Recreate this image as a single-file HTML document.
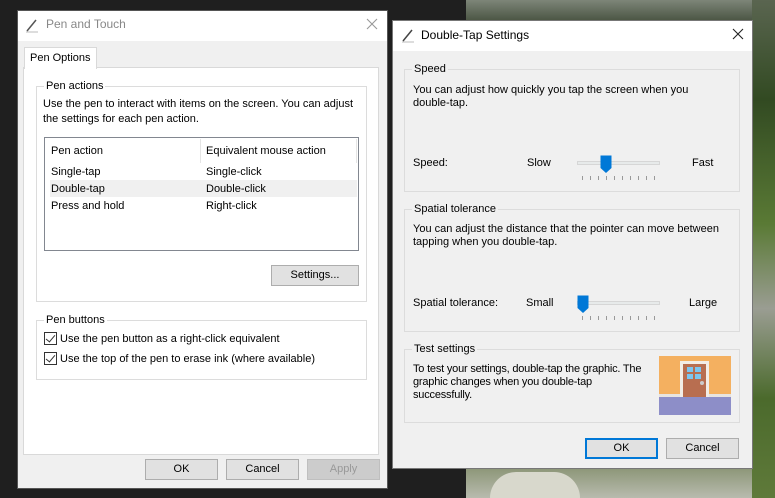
<!DOCTYPE html>
<html><head><meta charset="utf-8"><style>
*{margin:0;padding:0;box-sizing:border-box}
body{width:775px;height:498px;overflow:hidden;background:#1f1f1f;position:relative;font-family:"Liberation Sans",sans-serif;font-size:11px;color:#000;white-space:nowrap}
.a{position:absolute}
.photo{left:466px;top:0;width:309px;height:498px;background:linear-gradient(180deg,#7d8578 0%,#34402c 6%,#2f3b26 30%,#4a5e30 55%,#5c6d45 80%,#7e8a66 92%,#b8bbae 100%)}
.photo2{left:752px;top:0;width:23px;height:498px;background:linear-gradient(180deg,#5a6550,#324a22 20%,#5a7a35 45%,#9a9d92 62%,#4b6a2c 80%,#5f7a3a)}
.dlg{background:#f0f0f0;border:1px solid #888}
.title{background:#fff;height:30px}
.grp{border:1px solid #dcdcdc}
.lg{position:absolute;top:-8px;left:7px;background:#f0f0f0;padding:0 2px;line-height:14px}
.btn{position:absolute;height:21px;background:#e1e1e1;border:1px solid #adadad;text-align:center;line-height:19px}
.cb{position:absolute;width:13px;height:13px;border:1px solid #333;background:#fff}
.cb:after{content:"";position:absolute;left:3px;top:0px;width:4px;height:8px;border:solid #333;border-width:0 1.5px 1.5px 0;transform:rotate(40deg)}
.ticks span{position:absolute;top:0;width:1px;height:4px;background:#999}
</style></head><body>
<div class="a photo"></div>
<div class="a photo2"></div>
<div class="a" style="left:490px;top:472px;width:90px;height:26px;background:#d8d8cc;border-radius:40px 40px 0 0"></div>

<div class="a dlg" style="left:17px;top:10px;width:371px;height:479px;border-color:#555">
 <div class="title"></div>
</div>
<svg class="a" style="left:24px;top:17px" width="16" height="16"><path d="M3 14 L12 3" stroke="#555" stroke-width="1.5"/><path d="M2 15 L14 15" stroke="#bbb"/></svg>
<div class="a" style="left:46px;top:17px;font-size:12px;color:#888">Pen and Touch</div>
<svg class="a" style="left:366px;top:18px" width="12" height="12"><path d="M1 1L11 11M11 1L1 11" stroke="#999" stroke-width="1.1"/></svg>
<div class="a" style="left:23px;top:67px;width:356px;height:388px;background:#fff;border:1px solid #d9d9d9"></div>
<div class="a" style="left:24px;top:47px;width:73px;height:22px;background:#fff;border:1px solid #d9d9d9;border-bottom:none;padding:4px 5px">Pen Options</div>

<div class="a grp" style="left:36px;top:86px;width:331px;height:216px;background:#fff"><div class="lg" style="background:#fff">Pen actions</div></div>
<div class="a" style="left:43px;top:97px;line-height:15px">Use the pen to interact with items on the screen. You can adjust<br>the settings for each pen action.</div>
<div class="a" style="left:44px;top:137px;width:315px;height:114px;border:1px solid #828790;background:#fff"></div>
<div class="a" style="left:200px;top:139px;width:1px;height:24px;background:#e5e5e5"></div>
<div class="a" style="left:356px;top:139px;width:1px;height:24px;background:#e5e5e5"></div>
<div class="a" style="left:51px;top:145px">Pen action</div>
<div class="a" style="left:206px;top:145px">Equivalent mouse action</div>
<div class="a" style="left:50px;top:180px;width:307px;height:17px;background:#f0f0f0"></div>
<div class="a" style="left:51px;top:166px">Single-tap</div><div class="a" style="left:206px;top:166px">Single-click</div>
<div class="a" style="left:51px;top:183px">Double-tap</div><div class="a" style="left:206px;top:183px">Double-click</div>
<div class="a" style="left:51px;top:200px">Press and hold</div><div class="a" style="left:206px;top:200px">Right-click</div>
<div class="btn" style="left:271px;top:265px;width:88px">Settings...</div>

<div class="a grp" style="left:36px;top:320px;width:331px;height:60px;background:#fff"><div class="lg" style="background:#fff">Pen buttons</div></div>
<div class="cb" style="left:44px;top:332px"></div><div class="a" style="left:60px;top:333px">Use the pen button as a right-click equivalent</div>
<div class="cb" style="left:44px;top:352px"></div><div class="a" style="left:60px;top:353px">Use the top of the pen to erase ink (where available)</div>

<div class="btn" style="left:145px;top:459px;width:73px">OK</div>
<div class="btn" style="left:226px;top:459px;width:73px">Cancel</div>
<div class="btn" style="left:307px;top:459px;width:73px;background:#cccccc;border-color:#bfbfbf;color:#999">Apply</div>

<div class="a dlg" style="left:392px;top:20px;width:361px;height:449px;border-color:#777">
 <div class="title"></div>
</div>
<svg class="a" style="left:400px;top:27px" width="16" height="16"><path d="M3 14 L12 3" stroke="#444" stroke-width="1.5"/><path d="M2 15 L14 15" stroke="#bbb"/></svg>
<div class="a" style="left:421px;top:28px;font-size:12px">Double-Tap Settings</div>
<svg class="a" style="left:732px;top:28px" width="12" height="12"><path d="M1 1L11 11M11 1L1 11" stroke="#222" stroke-width="1.1"/></svg>

<div class="a grp" style="left:404px;top:69px;width:336px;height:123px"><div class="lg">Speed</div></div>
<div class="a" style="left:413px;top:84px;line-height:13px">You can adjust how quickly you tap the screen when you<br>double-tap.</div>
<div class="a" style="left:413px;top:157px">Speed:</div>
<div class="a" style="left:527px;top:157px">Slow</div>
<div class="a" style="left:692px;top:157px">Fast</div>
<div class="a" style="left:577px;top:161px;width:83px;height:4px;background:#e7eaea;border:1px solid #d6d6d6"></div>
<svg class="a" style="left:600px;top:155px" width="12" height="20"><path d="M0.5 0.5H11.5V13L6 18L0.5 13Z" fill="#0078d7"/></svg>
<div class="a ticks" style="left:582px;top:176px"><span style="left:0"></span><span style="left:8px"></span><span style="left:16px"></span><span style="left:24px"></span><span style="left:32px"></span><span style="left:40px"></span><span style="left:48px"></span><span style="left:56px"></span><span style="left:64px"></span><span style="left:72px"></span></div>

<div class="a grp" style="left:404px;top:209px;width:336px;height:123px"><div class="lg">Spatial tolerance</div></div>
<div class="a" style="left:413px;top:223px;line-height:13px">You can adjust the distance that the pointer can move between<br>tapping when you double-tap.</div>
<div class="a" style="left:413px;top:297px">Spatial tolerance:</div>
<div class="a" style="left:526px;top:297px">Small</div>
<div class="a" style="left:689px;top:297px">Large</div>
<div class="a" style="left:577px;top:301px;width:83px;height:4px;background:#e7eaea;border:1px solid #d6d6d6"></div>
<svg class="a" style="left:577px;top:295px" width="12" height="20"><path d="M0.5 0.5H11.5V13L6 18L0.5 13Z" fill="#0078d7"/></svg>
<div class="a ticks" style="left:582px;top:316px"><span style="left:0"></span><span style="left:8px"></span><span style="left:16px"></span><span style="left:24px"></span><span style="left:32px"></span><span style="left:40px"></span><span style="left:48px"></span><span style="left:56px"></span><span style="left:64px"></span><span style="left:72px"></span></div>

<div class="a grp" style="left:404px;top:349px;width:336px;height:74px"><div class="lg">Test settings</div></div>
<div class="a" style="left:413px;top:363px;line-height:13px;letter-spacing:-0.2px">To test your settings, double-tap the graphic. The<br>graphic changes when you double-tap<br>successfully.</div>
<svg class="a" style="left:659px;top:356px" width="72" height="59">
<rect width="72" height="59" fill="#f4b060"/><rect y="40" width="72" height="19" fill="#8d8ec8"/><rect y="38" width="72" height="3" fill="#e8e4e0"/>
<rect x="21" y="5" width="29" height="36" fill="#f2ede6"/><rect x="24" y="8" width="23" height="33" fill="#b86e50"/>
<rect x="28" y="11" width="6" height="5" fill="#7cc6f0"/><rect x="36" y="11" width="6" height="5" fill="#7cc6f0"/><rect x="28" y="18" width="6" height="5" fill="#7cc6f0"/><rect x="36" y="18" width="6" height="5" fill="#7cc6f0"/>
<circle cx="43" cy="27" r="2" fill="#ccc"/></svg>

<div class="btn" style="left:585px;top:438px;width:73px;border:2px solid #0078d7;line-height:17px">OK</div>
<div class="btn" style="left:666px;top:438px;width:73px">Cancel</div>
</body></html>
